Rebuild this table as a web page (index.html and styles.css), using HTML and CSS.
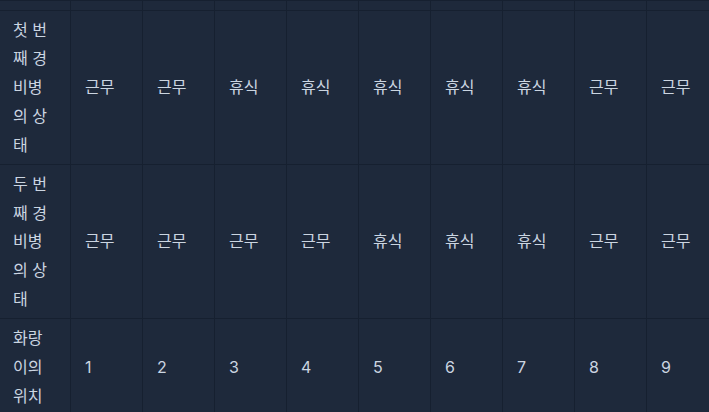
FILE: index.html
```html
<!DOCTYPE html>
<html lang="ko">
<head>
<meta charset="utf-8">
<link rel="stylesheet" href="styles.css">
</head>
<body>
<div class="scroller">
<table class="grid">
  <colgroup>
    <col class="c-head">
    <col class="c-data"><col class="c-data"><col class="c-data"><col class="c-data"><col class="c-data"><col class="c-data"><col class="c-data"><col class="c-data"><col class="c-data">
  </colgroup>
  <tr class="top"><td></td><td></td><td></td><td></td><td></td><td></td><td></td><td></td><td></td><td></td></tr>
  <tr>
    <th>첫 번째 경비병의 상태</th>
    <td>근무</td><td>근무</td><td>휴식</td><td>휴식</td><td>휴식</td><td>휴식</td><td>휴식</td><td>근무</td><td>근무</td>
  </tr>
  <tr>
    <th>두 번째 경비병의 상태</th>
    <td>근무</td><td>근무</td><td>근무</td><td>근무</td><td>휴식</td><td>휴식</td><td>휴식</td><td>근무</td><td>근무</td>
  </tr>
  <tr>
    <th>화랑이의 위치</th>
    <td>1</td><td>2</td><td>3</td><td>4</td><td>5</td><td>6</td><td>7</td><td>8</td><td>9</td>
  </tr>
</table>
</div>
</body>
</html>
```
FILE: styles.css
```css
html, body {
  margin: 0;
  padding: 0;
  background: #1e293b;
}
body {
  width: 709px;
  height: 412px;
  overflow: hidden;
  font-family: Inter, "Noto Sans CJK KR", sans-serif;
  font-size: 16px;
  line-height: 1.8;
  color: #cbd5e1;
}
.scroller {
  margin-left: -1px;
  width: 730px;
}
.grid {
  border-collapse: collapse;
  table-layout: fixed;
  width: 719px;
}
.c-head { width: 71px; }
.c-data { width: 72px; }
.grid th,
.grid td {
  border: 1px solid #162030;
  padding: 4.6px 14px;
  text-align: left;
  vertical-align: middle;
  font-weight: 400;
}
.grid th {
  padding-left: 13px;
  padding-right: 14px;
}
.grid .top td {
  height: 9px;
  padding: 0;
  line-height: 0;
}
```
